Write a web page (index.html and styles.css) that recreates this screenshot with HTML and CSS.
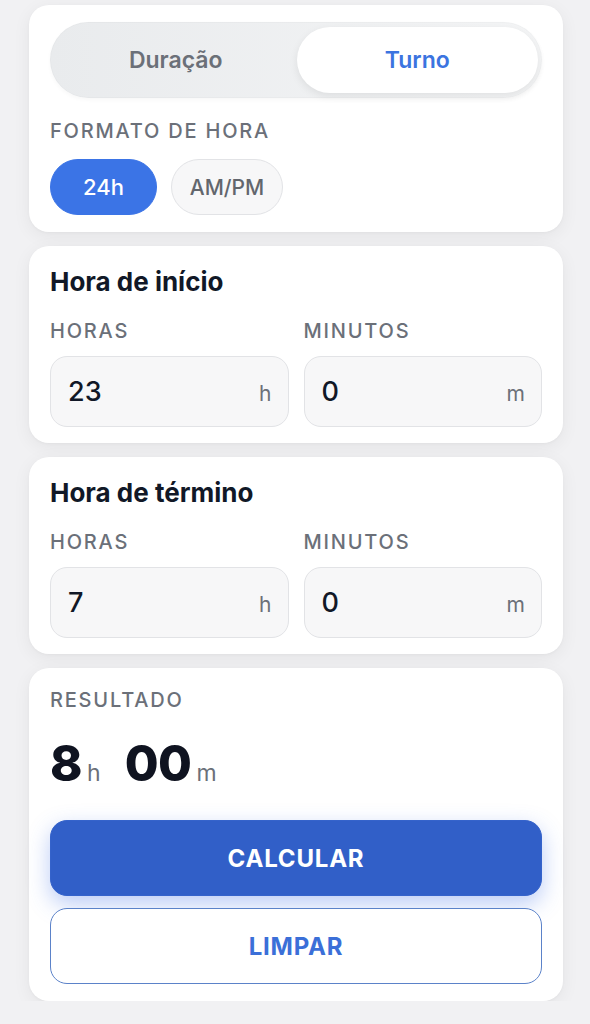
FILE: index.html
```html
<!DOCTYPE html>
<html lang="pt">
<head>
<meta charset="utf-8">
<link rel="stylesheet" href="styles.css">
</head>
<body>
<main class="page">
  <section class="card card-top">
    <div class="segmented">
      <div class="seg">Duração</div>
      <div class="seg seg-active">Turno</div>
    </div>
    <div class="label label-format">FORMATO DE HORA</div>
    <div class="chips">
      <div class="chip chip-active">24h</div>
      <div class="chip">AM/PM</div>
    </div>
  </section>

  <section class="card card-time">
    <h2 class="title">Hora de início</h2>
    <div class="fields">
      <div class="field">
        <div class="label">HORAS</div>
        <div class="input"><span class="val">23</span><span class="unit">h</span></div>
      </div>
      <div class="field">
        <div class="label">MINUTOS</div>
        <div class="input"><span class="val">0</span><span class="unit">m</span></div>
      </div>
    </div>
  </section>

  <section class="card card-time">
    <h2 class="title">Hora de término</h2>
    <div class="fields">
      <div class="field">
        <div class="label">HORAS</div>
        <div class="input"><span class="val">7</span><span class="unit">h</span></div>
      </div>
      <div class="field">
        <div class="label">MINUTOS</div>
        <div class="input"><span class="val">0</span><span class="unit">m</span></div>
      </div>
    </div>
  </section>

  <section class="card card-result">
    <div class="label">RESULTADO</div>
    <div class="result">
      <span class="big">8</span><span class="small">h</span>
      <span class="big big-min">00</span><span class="small">m</span>
    </div>
    <button class="btn btn-primary">CALCULAR</button>
    <button class="btn btn-outline">LIMPAR</button>
  </section>
</main>
</body>
</html>
```

FILE: styles.css
```css
* { box-sizing: border-box; }
html, body { margin: 0; padding: 0; }
body {
  background: #f1f1f3;
  font-family: Inter, "Noto Sans", "Liberation Sans", sans-serif;
  color: #111827;
}
.page {
  padding: 5px 27px 0 29px;
  display: flex;
  flex-direction: column;
  gap: 14px;
}
.card {
  background: #ffffff;
  border-radius: 20px;
  box-shadow: 0 4px 18px rgba(0,0,0,0.06), 0 1px 3px rgba(0,0,0,0.03);
  padding: 17px 21px;
  display: flex;
  flex-direction: column;
}
.segmented {
  display: flex;
  height: 76px;
  border-radius: 38px;
  background: linear-gradient(90deg, #e9ebed, #f4f5f6);
  padding: 5px 4px 5px 5px;
  box-shadow: inset 0 0 0 1px rgba(0,0,0,0.02), 0 2px 4px rgba(0,0,0,0.03);
}
.seg {
  flex: 1;
  display: flex;
  align-items: center;
  justify-content: center;
  font-size: 23px;
  font-weight: 600;
  color: #6b7078;
  border-radius: 33px;
}
.seg-active {
  background: #ffffff;
  color: #3b74e0;
  box-shadow: 0 3px 8px rgba(0,0,0,0.08);
}
.label {
  font-size: 20px;
  line-height: 22px;
  letter-spacing: 1.8px;
  color: #6b7079;
  font-weight: 500;
}
.label-format { margin-top: 22px; }
.chips {
  display: flex;
  gap: 14px;
  margin-top: 17px;
}
.chip {
  height: 56px;
  border-radius: 28px;
  display: flex;
  align-items: center;
  justify-content: center;
  font-size: 21px;
  font-weight: 500;
  color: #62666d;
  background: #f7f7f8;
  border: 1px solid #e2e3e6;
  width: 112px;
}
.chip-active {
  width: 107px;
  font-size: 22px;
  background: #3b74e6;
  border-color: #3b74e6;
  color: #ffffff;
}
.card-time { padding: 22px 21px 16px; }
.title {
  margin: 0;
  font-size: 26px;
  line-height: 28px;
  font-weight: 700;
  color: #111827;
}
.fields {
  display: flex;
  gap: 15px;
  margin-top: 24px;
}
.field { flex: 1; display: flex; flex-direction: column; }
.input {
  margin-top: 14px;
  height: 71px;
  border-radius: 17px;
  background: #f7f7f8;
  border: 1px solid #e2e3e6;
  display: flex;
  align-items: center;
  justify-content: space-between;
  padding: 0 16px 0 17px;
}
.val { font-size: 27px; color: #111827; font-weight: 500; }
.unit { font-size: 21px; color: #6b7079; margin-top: 4px; }
.card-result { padding: 21px 21px 17px; }
.result {
  margin-top: 27px;
  display: flex;
  align-items: baseline;
  height: 52px;
}
.big {
  font-size: 49px;
  line-height: 52px;
  font-weight: 800;
  color: #0f1320;
  letter-spacing: -0.5px;
}
.big-min { margin-left: 24px; }
.small {
  font-size: 23px;
  color: #6b7079;
  margin-left: 5px;
}
.btn {
  font-family: inherit;
  width: 100%;
  height: 76px;
  border-radius: 17px;
  font-size: 24px;
  font-weight: 700;
  letter-spacing: 0.8px;
  cursor: pointer;
}
.btn-primary {
  margin-top: 30px;
  background: #315fc8;
  color: #ffffff;
  border: 1px solid #3563cb;
  box-shadow: 0 8px 22px rgba(60,110,230,0.35);
}
.btn-outline {
  margin-top: 12px;
  background: #ffffff;
  color: #3b6fd8;
  border: 1.5px solid #5b82c9;
}
```
